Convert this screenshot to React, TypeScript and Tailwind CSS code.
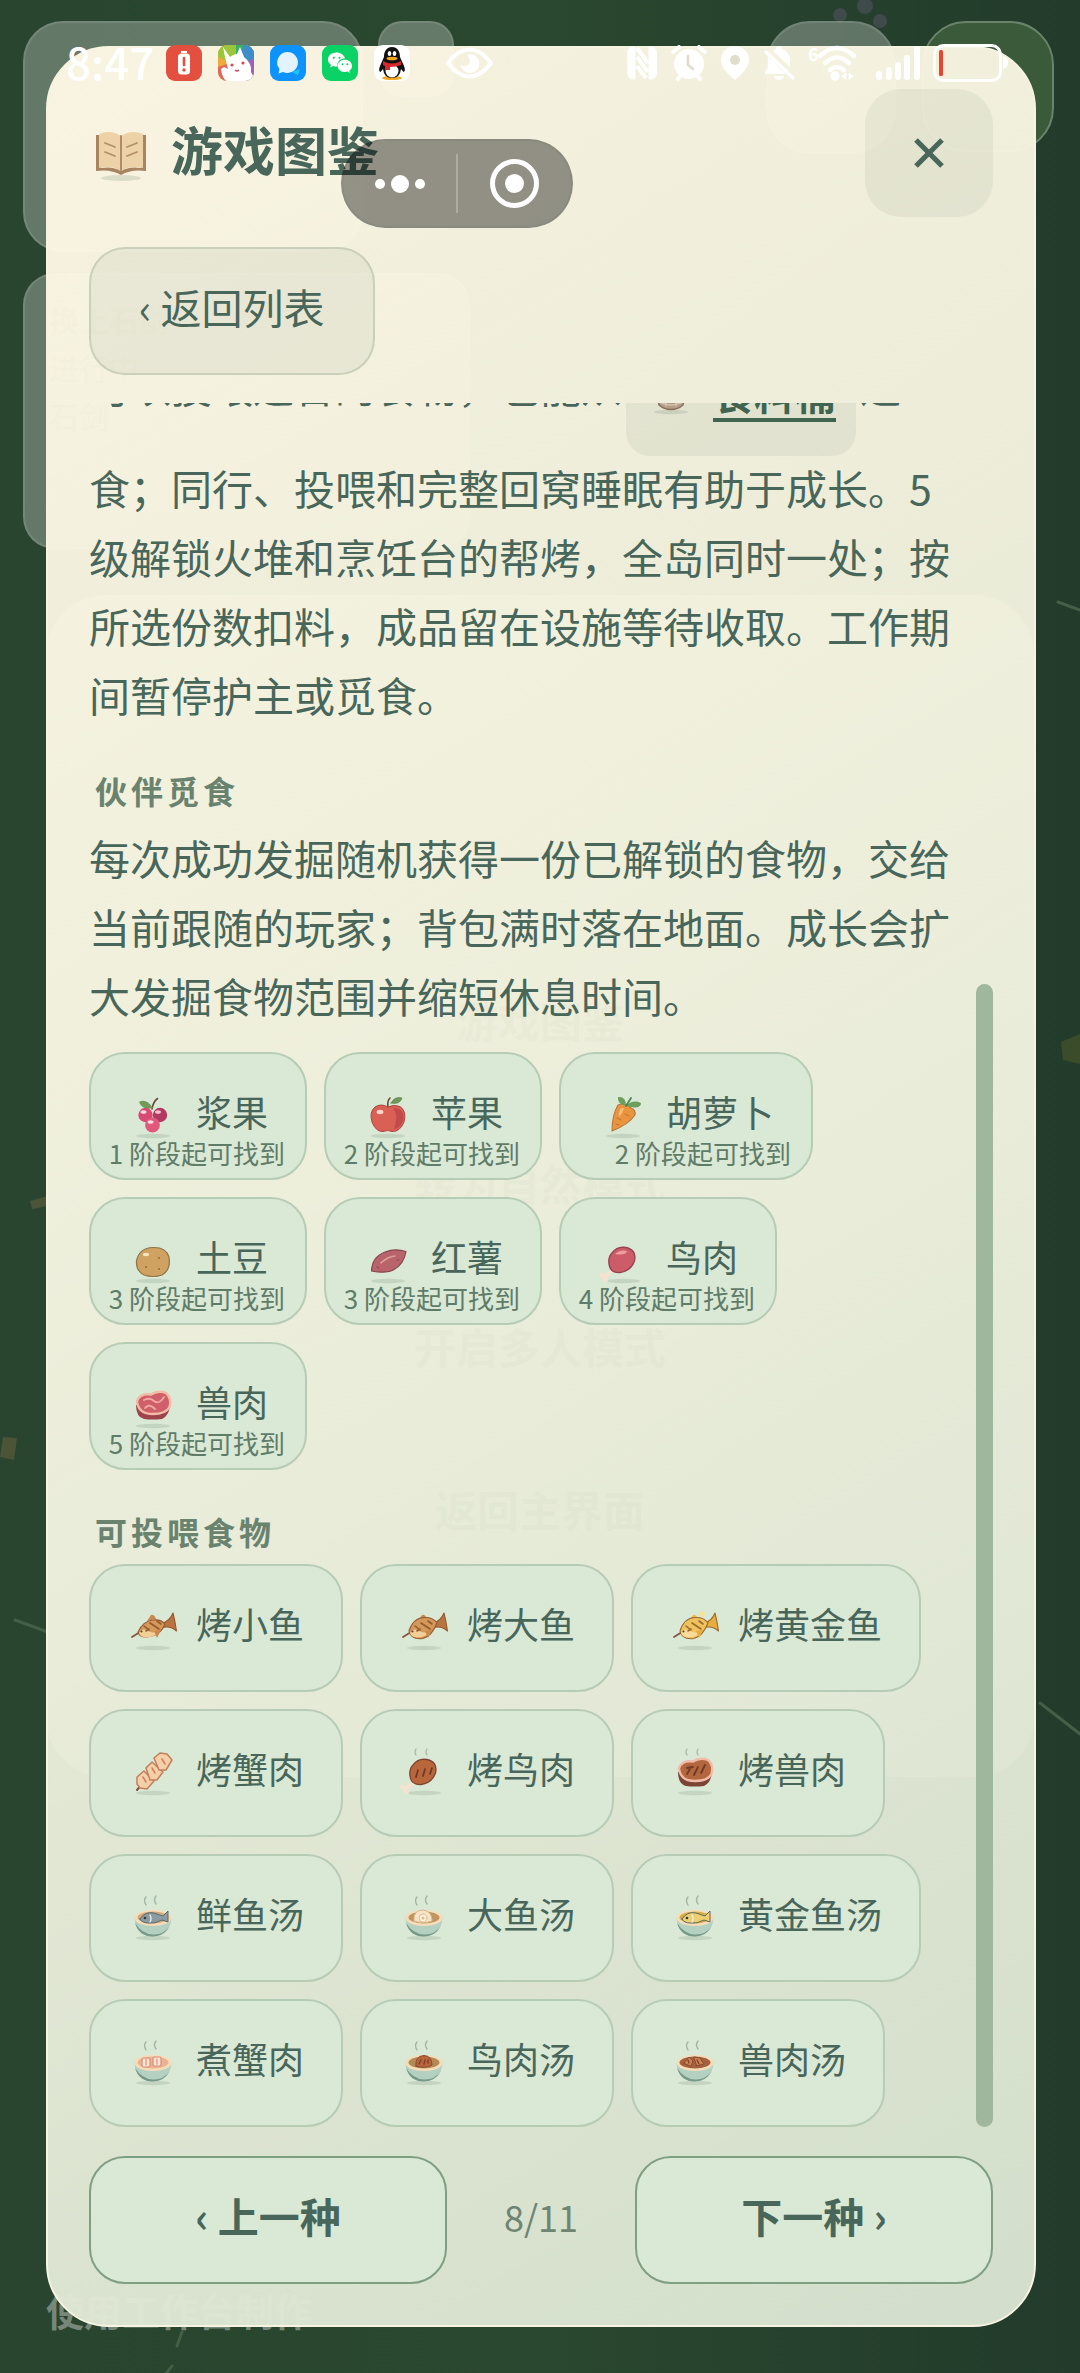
import React, { ReactNode } from 'react';
import { X } from 'lucide-react';

interface Food {
    name: string;
    icon: ReactNode;
    stage?: number;
}

const Shadow = () => (
    <ellipse cx="25" cy="45" rx="17" ry="2.2" fill="#5c7a62" opacity="0.18" />
);

const FoodSvg = ({ children }: { children: ReactNode }) => (
    <svg
        viewBox="0 0 50 50"
        className="h-[50px] w-[50px] shrink-0 overflow-visible"
        fill="none"
        strokeLinecap="round"
        strokeLinejoin="round"
        aria-hidden="true"
    >
        <Shadow />
        {children}
    </svg>
);

const Berries = () => (
    <FoodSvg>
        <path d="M24 18Q25 11 29.5 7.5" stroke="#6b4a3a" strokeWidth="1.6" />
        <path d="M11 11Q18 7 25 17Q15 20 11 11Z" fill="#6f9a58" />
        <circle cx="17.5" cy="24" r="7.2" fill="#d94a73" />
        <circle cx="32" cy="24" r="7.2" fill="#b23a63" />
        <circle cx="24.5" cy="34" r="7.4" fill="#e0587c" />
        <ellipse cx="15.5" cy="21" rx="3" ry="1.8" fill="#fbd9de" />
        <ellipse cx="30" cy="21" rx="3" ry="1.8" fill="#f3c0cb" />
        <ellipse cx="22.5" cy="31" rx="3" ry="1.8" fill="#fbd9de" />
    </FoodSvg>
);

const Apple = () => (
    <FoodSvg>
        <path d="M25 15Q24 10 27 7" stroke="#6b4a3a" strokeWidth="1.6" />
        <path d="M28 12Q32 5 39 7Q37 14 28 12Z" fill="#6f9a58" stroke="#55804a" strokeWidth="0.7" />
        <path
            d="M25 16Q18 12 12 16Q6 21 9 31Q13 41 20 40.500Q25 38.500 29 40.500Q37 41 41 31Q44 20 37 15.500Q30 13 25 16Z"
            fill="#da5f55"
            stroke="#ab453f"
            strokeWidth="1"
        />
        <path d="M30 17Q36 24 31 38Q38 37 40 29Q42 17 30 17Z" fill="#c24a47" />
        <ellipse cx="17" cy="21" rx="3.4" ry="2.2" fill="#fbd5c6" />
    </FoodSvg>
);

const Carrot = () => (
    <FoodSvg>
        <path
            d="M20 14Q27 11 33 17Q38 19 37 24Q30 34 14 40Q14 24 20 14Z"
            fill="#ea9440"
            stroke="#b9763a"
            strokeWidth="1.1"
        />
        <path d="M23 17Q20 22 21 26Q25 22 26 17Z" fill="#f5bd78" />
        <path d="M19 27l4 2M27 23l4 2M18 33l3 1" stroke="#b9763a" strokeWidth="1" />
        <path d="M28 15Q19 13 20 6Q28 5 28 15Z" fill="#6b9f5c" />
        <path d="M28 15Q35 8 43 12Q43 19 28 15Z" fill="#6b9f5c" />
        <path d="M28 15L33 7" stroke="#4f8550" strokeWidth="1.8" />
    </FoodSvg>
);

const Potato = () => (
    <FoodSvg>
        <path
            d="M25 11.500Q38 11 41 21Q43 34 34 39Q25 42 16 39Q8 35 8.500 25Q11 12 25 11.500Z"
            fill="#cfa262"
            stroke="#8e7449"
            strokeWidth="1.2"
        />
        <ellipse cx="18" cy="18.500" rx="3.2" ry="1.7" fill="#f7e3bd" />
        <g fill="#94733f">
            <circle cx="31" cy="22" r="1.1" />
            <circle cx="18" cy="31" r="1.1" />
            <circle cx="31" cy="33" r="1.1" />
        </g>
    </FoodSvg>
);

const SweetPotato = () => (
    <FoodSvg>
        <path
            d="M8.500 35Q9 21 22 16Q32 12 43 15.500Q41 28 31 33.500Q24 38 8.500 35Z"
            fill="#b9636a"
            stroke="#854850"
            strokeWidth="1.2"
        />
        <path d="M18 27Q24 21 32 20" stroke="#e0a09a" strokeWidth="1.6" />
        <path d="M14 31l2 1M34 24l2 0" stroke="#854850" strokeWidth="1" />
    </FoodSvg>
);

const BirdMeat = ({ cooked = false }: { cooked?: boolean }) => (
    <FoodSvg>
        {cooked && <path d="M17 1Q15 4 17 7M28 1Q26 4 28 7" stroke="#a9b9a8" strokeWidth="1.3" />}
        <path d="M15 34L6 41M3 38.500L8 44" stroke="#f5e3cf" strokeWidth="4" />
        <path
            d="M14 17Q19 10 28 11.500Q39 14 36.500 25Q33 35 22 36.500Q12 37 11 28Q10 21 14 17Z"
            fill={cooked ? '#b9673a' : '#cb5c68'}
            stroke={cooked ? '#7e4630' : '#96434f'}
            strokeWidth="1.3"
        />
        {cooked ? (
            <path d="M17 29l2-7M24 28l2-7M31 26l2-6" stroke="#6d3a2a" strokeWidth="1.8" />
        ) : (
            <path d="M17 18Q22 13 29 15Q28 20 17 18Z" fill="#ee9c9c" />
        )}
    </FoodSvg>
);

const BeastMeat = ({ cooked = false }: { cooked?: boolean }) => (
    <FoodSvg>
        {cooked && <path d="M17 1Q15 4 17 7M28 1Q26 4 28 7" stroke="#a9b9a8" strokeWidth="1.3" />}
        <path
            d="M8 24Q8 36 16 38Q24 39 34 38Q42 34 42 22Z"
            fill={cooked ? '#7c4434' : '#9d434c'}
        />
        <path
            d="M9 20Q12 12 23 13.500Q30 9 38 12Q44 17 41.500 26Q38 33 25 33Q10 33 9 20Z"
            fill={cooked ? '#b4673e' : '#cf5f68'}
            stroke="#f2bba8"
            strokeWidth="2.4"
        />
        {cooked ? (
            <path d="M17 26l4-7M24 27l4-8M31 25l4-8M17 20l6-1" stroke="#6d3a2a" strokeWidth="1.8" />
        ) : (
            <path d="M16 19Q22 16 26 20Q31 24 36 16M17 27Q21 22 27 28" stroke="#f0aaa5" strokeWidth="1.8" />
        )}
    </FoodSvg>
);

const GrilledFish = ({ kind }: { kind: 'small' | 'big' | 'gold' }) => {
    const gold = kind === 'gold';
    const body = gold ? '#f0c25e' : '#d3995a';
    const belly = gold ? '#fadb9b' : '#f3cf98';
    const line = gold ? '#9a6b30' : '#94592f';
    return (
        <FoodSvg>
            <path d="M4 34L12 29" stroke="#84573a" strokeWidth="1.8" />
            {gold && <path d="M32 8l1 2 2 1-2 1-1 2-1-2-2-1 2-1z" fill="#fbe58c" stroke="#fbe58c" />}
            <path d="M19 18L23 12Q26 11 28 16Z" fill={gold ? '#efbb3e' : '#c9894c'} />
            <path d="M33 21Q42 18 45 10Q47 18 48.500 28Q42 22 33 25Z" fill={gold ? '#e7ad3f' : '#b9753f'} stroke={line} strokeWidth="1.1" />
            <path
                d={
                    kind === 'small'
                        ? 'M10 29Q15 18 25 17Q33 16 37 21Q33 31 24 33Q12 36 10 29Z'
                        : 'M10 28Q14 15 25 14.500Q34 14 38 20Q33 33 24 35.500Q12 37 10 28Z'
                }
                fill={body}
                stroke={line}
                strokeWidth="1.1"
            />
            <path d="M11 30Q15 24 20 28Q27 31 32 28Q27 34 18 34.500Q12 34 11 30Z" fill={belly} />
            <path d="M26 28L29 35L33 27Z" fill={gold ? '#e7ad3f' : '#c9894c'} />
            <path d="M16 23l5 4M22 20l9 6M18 28l3-2M29 18l4 3" stroke={line} strokeWidth="1.6" />
            <circle cx="13.500" cy="28.500" r="1" fill="#5a3a26" />
        </FoodSvg>
    );
};

const CrabSkewer = () => (
    <FoodSvg>
        <path d="M9 42L14 36" stroke="#7d5038" strokeWidth="2" />
        <g fill="#f5cfa8" stroke="#c07f5c" strokeWidth="1.5">
            <path d="M9 29L16 23L26 33L19 41L12 40L9 36Z" />
            <path d="M18 20L24 14L35 24L29 32L22 32Z" />
            <path d="M26 10L32 5L39 6L44 12L38 22L31 22Z" />
        </g>
        <path d="M15 29l3 5M24 20l3 5M34 11l3 5" stroke="#d27e5d" strokeWidth="1.5" />
    </FoodSvg>
);

const Bowl = ({ soup, children }: { soup: string; children: ReactNode }) => (
    <FoodSvg>
        <path d="M18 4Q15 7 18 12M28 3Q25 7 28 11" stroke="#a3b5a4" strokeWidth="1.4" />
        <path d="M6.500 25Q8 43 25 43.500Q42 43 43.500 25Z" fill="#b4d0c0" />
        <path d="M7 30Q11 43.500 25 43.500Q36 43 41 34Q35 42 25 41.500Q14 41 7 30Z" fill="#76998a" />
        <ellipse cx="25" cy="25" rx="18.500" ry="8" fill="#f6dcb8" />
        <ellipse cx="25" cy="24.500" rx="15.500" ry="6" fill={soup} />
        {children}
    </FoodSvg>
);

const SoupFish = ({ color }: { color: string }) => (
    <g>
        <path
            d="M12 26Q17 18 26 20Q32 22 35 23L40 18L40 29L34 27Q27 31 20 30Q14 30 12 26Z"
            fill={color}
            stroke="#5d6b6c"
            strokeWidth="1"
        />
        <path d="M22 22Q24 26 22 29" stroke="#eef0e6" strokeWidth="1.3" />
        <circle cx="17" cy="25" r="1.3" fill="#2f3d3e" />
    </g>
);

const CrabSoup = () => (
    <Bowl soup="#eab394">
        <g fill="#fbe6d6" stroke="#dc8c74" strokeWidth="1.2">
            <rect x="14" y="20" width="8" height="9" rx="1.5" />
            <rect x="25" y="19" width="8" height="9" rx="1.5" />
        </g>
        <path d="M18 21v6M29 21v5" stroke="#e79d85" strokeWidth="1.4" />
    </Bowl>
);

const BigFishSoup = () => (
    <Bowl soup="#bf9560">
        <path d="M15 28Q14 17 24 17Q33 18 33 28Q24 31 15 28Z" fill="#f7e4c6" stroke="#d9b98c" strokeWidth="1" />
        <circle cx="24" cy="25" r="4" fill="#fbf1dd" stroke="#dfbf95" />
        <circle cx="24" cy="25" r="1.500" fill="#e2b98a" />
    </Bowl>
);

const BirdSoup = () => (
    <Bowl soup="#b18a55">
        <path d="M17 28Q16 18 25 17.500Q33 18 33 27Q26 31 17 28Z" fill="#bb663a" stroke="#88492f" strokeWidth="1" />
        <path d="M20 26l2-4M25 26l1-4M29 25l0-3" stroke="#7a3f29" strokeWidth="1.4" />
    </Bowl>
);

const BeastSoup = () => (
    <Bowl soup="#a4613f">
        <path d="M14 25L19 19L23 23L21 28Z M24 19L30 20L34 26L27 28Z" fill="#cc8350" stroke="#8d4a30" strokeWidth="1" />
        <path d="M27 22l2 4M18 22l1 3" stroke="#7a3f29" strokeWidth="1.300" />
    </Bowl>
);

const Bucket = () => (
    <FoodSvg>
        <path d="M11 16Q11 4 25 4Q39 4 39 16" stroke="#8a7561" strokeWidth="2" />
        <path d="M10 18H40L37 38Q32 42.500 25 42.500Q18 42.500 13 38Z" fill="#b39d88" stroke="#86705c" strokeWidth="1.500" />
        <path d="M13 35Q25 41 37 35M20 20v19M30 20v19" stroke="#d2c1ad" strokeWidth="1.600" />
    </FoodSvg>
);

const foraged: Food[] = [
    { name: '浆果', stage: 1, icon: <Berries /> },
    { name: '苹果', stage: 2, icon: <Apple /> },
    { name: '胡萝卜', stage: 2, icon: <Carrot /> },
    { name: '土豆', stage: 3, icon: <Potato /> },
    { name: '红薯', stage: 3, icon: <SweetPotato /> },
    { name: '鸟肉', stage: 4, icon: <BirdMeat /> },
    { name: '兽肉', stage: 5, icon: <BeastMeat /> },
];

const feedable: Food[] = [
    { name: '烤小鱼', icon: <GrilledFish kind="small" /> },
    { name: '烤大鱼', icon: <GrilledFish kind="big" /> },
    { name: '烤黄金鱼', icon: <GrilledFish kind="gold" /> },
    { name: '烤蟹肉', icon: <CrabSkewer /> },
    { name: '烤鸟肉', icon: <BirdMeat cooked /> },
    { name: '烤兽肉', icon: <BeastMeat cooked /> },
    { name: '鲜鱼汤', icon: <Bowl soup="#d9a878"><SoupFish color="#8b9ba3" /></Bowl> },
    { name: '大鱼汤', icon: <BigFishSoup /> },
    { name: '黄金鱼汤', icon: <Bowl soup="#d9ae3f"><SoupFish color="#efcf6d" /></Bowl> },
    { name: '煮蟹肉', icon: <CrabSoup /> },
    { name: '鸟肉汤', icon: <BirdSoup /> },
    { name: '兽肉汤', icon: <BeastSoup /> },
];

const FoodChips = ({ foods }: { foods: Food[] }) => (
    <ul className="flex flex-wrap gap-[17px]">
        {foods.map(({ name, icon, stage }) => (
            <li key={name}>
                <button
                    type="button"
                    className="relative flex h-32 items-center gap-[18px] rounded-[36px] border-2 border-[#b6ccb5] bg-[#dae8d6] px-[37px] text-[36px]"
                >
                    {icon}
                    <span className="pb-[10px] leading-[40px]">{name}</span>
                    {stage && (
                        <small className="absolute right-5 bottom-[10px] text-[26px] leading-[30px] whitespace-nowrap text-[#5f7c69]">
                            {stage} 阶段起可找到
                        </small>
                    )}
                </button>
            </li>
        ))}
    </ul>
);

const SectionTitle = ({ children }: { children: ReactNode }) => (
    <h3 className="mt-10 mb-3 pl-[6px] text-[32px] leading-[42px] font-bold tracking-[4px] text-[#6a836f]">
        {children}
    </h3>
);

// Dimmed game HUD and pause menu that stay behind the guide panel
const Backdrop = () => (
    <div className="absolute inset-0 overflow-hidden" aria-hidden="true">
        <svg className="absolute inset-0 h-full w-full" fill="none" strokeLinecap="round">
            <g fill="#3f4a4a">
                <circle cx="840" cy="15" r="7" />
                <circle cx="865" cy="6" r="8" />
                <circle cx="880" cy="21" r="7" />
            </g>
            <g stroke="#445f47" strokeWidth="3">
                <path d="M1058 602L1080 610" />
                <path d="M1040 1703L1080 1734" />
                <path d="M15 1620L48 1632" />
                <path d="M182 2332L177 2346" />
                <path d="M172 2366L164 2376L156 2380" />
            </g>
            <path d="M30 1201L48 1196V1206L32 1209Z" fill="#4b5437" />
            <path d="M3 1437L17 1438L14 1460L0 1457Z" fill="#4b5437" />
            <path d="M1061 1042L1080 1034V1064L1063 1060Z" fill="#3b4c2b" />
        </svg>
        <div className="absolute top-[21px] left-[23px] h-[231px] w-[340px] rounded-[40px] border-2 border-white/10 bg-white/28" />
        <div className="absolute top-[21px] left-[378px] h-[76px] w-[76px] rounded-[24px] border-2 border-white/10 bg-white/28" />
        <div className="absolute top-[21px] left-[766px] h-[133px] w-[130px] rounded-[44px] border-2 border-white/10 bg-white/28" />
        <div className="absolute top-[21px] left-[922px] h-[131px] w-[132px] rounded-[44px] border-2 border-[#6b836b] bg-[#3b5a3a]" />
        <div className="absolute top-[273px] left-[23px] h-[276px] w-[447px] rounded-[32px] border-2 border-white/10 bg-white/28 pt-5 pl-6 text-[30px] leading-[48px] text-[#1e3324]">
            <p className="font-bold">换上石剑</p>
            <p>进行中</p>
            <p>石剑</p>
        </div>
        <div className="absolute inset-x-[46px] top-[595px] flex h-[1182px] flex-col items-center rounded-[60px] bg-white/45 pt-[395px] text-[42px] font-bold text-[#1e3324]">
            <p className="mb-[103px] leading-[60px]">游戏图鉴</p>
            <p className="mb-[103px] leading-[60px]">转为自然模式</p>
            <p className="mb-[103px] leading-[60px]">开启多人模式</p>
            <p className="leading-[60px]">返回主界面</p>
        </div>
        <p className="absolute bottom-[38px] left-[46px] text-[38px] leading-[50px] font-bold text-[#77877a]">
            使用工作台制作
        </p>
    </div>
);

const StatusBar = () => (
    <div className="pointer-events-none absolute inset-x-0 top-[44px] flex h-[38px] items-center justify-between pr-[72px] pl-[66px] text-white">
        <div className="flex items-center gap-4">
            <span className="w-[84px] pb-1 text-[44px] leading-[38px] font-medium">8:47</span>
            <svg viewBox="0 0 36 36" className="h-9 w-9">
                <rect width="36" height="36" rx="9" fill="#e4503f" />
                <path d="M15 6h6v2h-6z" fill="#fff" />
                <rect x="12" y="8.500" width="12" height="21" rx="3.500" fill="#fff" />
                <path d="M18 13v7" stroke="#e4503f" strokeWidth="2.600" strokeLinecap="round" />
                <circle cx="18" cy="25" r="1.700" fill="#e4503f" />
            </svg>
            <svg viewBox="0 0 36 36" className="h-9 w-9">
                <defs>
                    <clipPath id="app-shape">
                        <rect width="36" height="36" rx="9" />
                    </clipPath>
                </defs>
                <g clipPath="url(#app-shape)">
                    <rect width="36" height="36" fill="#f0a93c" />
                    <path d="M0 0H20L14 18L0 12Z" fill="#9cc63a" />
                    <path d="M18 0H36V12L18 16Z" fill="#3fae6a" />
                    <path d="M26 0H36V20L20 16Z" fill="#3f8ccb" />
                    <path d="M36 14V36H24L22 18Z" fill="#9b62b5" />
                    <path d="M0 22L12 18V36H0Z" fill="#e2685f" />
                    <path d="M5 2L12 12Q16 9 19 9L22 2L26 12Q34 18 33 27Q36 31 36 36H8Q4 32 3 24L6 22L10 24Q8 16 7 12Z" fill="#fff" />
                    <circle cx="14" cy="20" r="1.600" fill="#d9485a" />
                    <circle cx="25" cy="18" r="1.600" fill="#d9485a" />
                    <path d="M17 25q2 2 4 0" stroke="#d9485a" strokeWidth="1.200" fill="none" />
                </g>
            </svg>
            <svg viewBox="0 0 36 36" className="h-9 w-9">
                <rect width="36" height="36" rx="9" fill="#0d93fb" />
                <path d="M22 27L30 24L28 30Z" fill="#19c8f5" />
                <path d="M17 7A10.500 10.500 0 1 1 13 27L8.500 28.500L9.500 24A10.500 10.500 0 0 1 17 7Z" fill="#e3f2ff" />
            </svg>
            <svg viewBox="0 0 36 36" className="h-9 w-9">
                <rect width="36" height="36" rx="9" fill="#0bd264" />
                <path d="M14.500 7.500C9.500 7.500 6 10.700 6 14.500c0 2.200 1.100 4 3 5.400L8.200 22.600 11.300 21a11 11 0 0 0 4.200.5c-.8-4.400 2.700-8.100 7.500-8.200-1-3.500-4.500-5.800-8.500-5.800z" fill="#fff" />
                <path d="M23 14.800c-4.200 0-7.300 2.700-7.300 6.100s3.100 6.100 7.300 6.100c.9 0 1.700-.1 2.500-.4l2.500 1.300-.7-2.200c1.700-1.200 2.700-2.900 2.700-4.800 0-3.400-3-6.100-7-6.100z" fill="#fff" />
                <g fill="#0bd264">
                    <circle cx="11.800" cy="12.800" r="1.100" />
                    <circle cx="17.500" cy="12.800" r="1.100" />
                    <circle cx="20.600" cy="19.300" r="1" />
                    <circle cx="25.400" cy="19.300" r="1" />
                </g>
            </svg>
            <svg viewBox="0 0 36 36" className="h-9 w-9">
                <rect width="36" height="36" rx="9" fill="#fff" />
                <ellipse cx="18" cy="33" rx="10" ry="2" fill="#f3a823" />
                <path d="M18 2C12.500 2 10 6.500 10 12L6 21Q4 26 6.500 27L9 24Q10 33 18 33Q26 33 27 24L29.500 27Q32 26 30 21L26 12C26 6.500 23.500 2 18 2Z" fill="#111" />
                <ellipse cx="18" cy="26" rx="6.500" ry="6.500" fill="#fff" />
                <ellipse cx="15.500" cy="8.500" rx="1.800" ry="2.600" fill="#fff" />
                <ellipse cx="20.500" cy="8.500" rx="1.800" ry="2.600" fill="#fff" />
                <ellipse cx="18" cy="13.500" rx="5.500" ry="1.800" fill="#f3a823" />
                <path d="M9 16Q18 21 27 16V20Q22 22 16 22V25H11V21L9 20Z" fill="#d8262c" />
            </svg>
            <svg viewBox="0 0 47 32" className="ml-5 h-8 w-[47px]" fill="none">
                <path d="M2 16Q12 2.500 23.500 2.500Q35 2.500 45 16Q35 29.500 23.500 29.500Q12 29.500 2 16Z" stroke="#fff" strokeWidth="4" />
                <path d="M24 7A9.500 9.500 0 1 1 14.500 18Q20 21 23 17Q25 12 21 8Z" fill="#fff" />
            </svg>
        </div>
        <div className="flex items-center gap-[13px]">
            <svg viewBox="0 0 32 36" className="h-9 w-8" fill="none" stroke="#fff">
                <path d="M9 2H6Q1.500 3 1.500 8V28Q1.500 33 6 34H9Z" fill="#fff" strokeWidth="1" />
                <path d="M23 2H26Q30.500 3 30.500 8V28Q30.500 33 26 34H23Z" fill="#fff" strokeWidth="1" />
                <path d="M11 3L22 18M11 12L22 27M11 21L20 33" strokeWidth="4" />
            </svg>
            <svg viewBox="0 0 36 36" className="h-9 w-9" fill="none" strokeLinecap="round">
                <circle cx="18" cy="19" r="15" fill="#fff" />
                <path d="M2 7L8 2M34 7L28 2M7 34L10 30M29 34L26 30" stroke="#fff" strokeWidth="4" />
                <path d="M17 11V20L22 24" stroke="#dedcc9" strokeWidth="2.500" />
            </svg>
            <svg viewBox="0 0 30 36" className="h-9 w-[30px]">
                <path d="M15 1A14 14 0 0 1 29 15Q29 24 15 35Q1 24 1 15A14 14 0 0 1 15 1Z" fill="#fff" />
                <circle cx="15" cy="15" r="5" fill="#dfdec9" />
            </svg>
            <svg viewBox="0 0 32 36" className="h-9 w-8" strokeLinecap="round">
                <path d="M16 1Q19 1 19 4Q27 7 27 15V22L10 6Q12 4 13 4Q13 1 16 1Z" fill="#fff" />
                <path d="M5 12L23 29H2Q1 27 5 23Z" fill="#fff" />
                <path d="M3 7L30 33" stroke="#fff" strokeWidth="3.500" />
                <path d="M11 31H21Q20 35 16 35Q12 35 11 31Z" fill="#fff" />
            </svg>
            <div className="relative h-9 w-[49px]">
                <span className="absolute -top-1 left-0 text-[18px] leading-[24px] font-bold">6</span>
                <svg viewBox="0 0 49 36" className="h-9 w-[49px]" fill="none" stroke="#fff" strokeWidth="4.500" strokeLinecap="round">
                    <path d="M12 11Q29 -5 46 11" />
                    <path d="M17 18Q29 7 41 18" />
                    <path d="M22 25Q29 19 36 25" />
                    <circle cx="27" cy="31" r="2.500" fill="#fff" />
                    <path d="M34 31L38 28V34ZM45 31L41 28V34Z" fill="#fff" strokeWidth="1" />
                </svg>
            </div>
            <svg viewBox="0 0 44 36" className="ml-[6px] h-9 w-11" stroke="#fff" strokeWidth="6" strokeLinecap="round">
                <path d="M3 29V32M13 25V32M22 20V32M31 13V32M41 4V32" />
            </svg>
            <svg viewBox="0 0 75 38" className="h-[38px] w-[75px]" fill="none">
                <rect x="1.500" y="1.500" width="66" height="35" rx="9" stroke="#fff" strokeWidth="3" />
                <path d="M70 12Q75 13 75 18.500Q75 24 70 25Z" fill="#fff" />
                <rect x="6" y="6" width="4" height="26" rx="1.500" fill="#e8452f" />
            </svg>
        </div>
    </div>
);

const MiniProgramCapsule = () => (
    <div className="absolute top-[139px] left-[341px] flex h-[89px] w-[232px] items-center rounded-full border-2 border-black/5 bg-black/40">
        <button type="button" aria-label="更多" className="flex h-full flex-1 items-center justify-center gap-[6px]">
            <span className="h-[10px] w-[10px] rounded-full bg-white" />
            <span className="h-[18px] w-[18px] rounded-full bg-white" />
            <span className="h-[10px] w-[10px] rounded-full bg-white" />
        </button>
        <span className="h-[59px] w-[2px] bg-white/25" />
        <button type="button" aria-label="关闭小程序" className="flex h-full flex-1 items-center justify-center">
            <span className="flex h-[49px] w-[49px] items-center justify-center rounded-full border-[5px] border-white">
                <span className="h-[19px] w-[19px] rounded-full bg-white" />
            </span>
        </button>
    </div>
);

const App = () => {
    return (
        <div className="relative flex h-screen flex-col overflow-hidden bg-linear-to-r from-[#29452f] via-[#2a472f] to-[#223b2b] pt-[46px] pr-[44px] pb-[46px] pl-[46px] font-['Noto_Sans_CJK_SC','Noto_Sans',sans-serif] text-[#48665a]">
            <Backdrop />

            <main className="relative flex min-h-0 flex-1 flex-col rounded-[63px] border-2 border-[#f6f3e1] bg-linear-[150deg,rgb(255_249_230_/_0.96),rgb(241_242_222_/_0.96)_45%,rgb(217_229_210_/_0.96)] p-[41px]">
                <header className="flex items-center justify-between">
                    <h1 className="flex items-center gap-[18px] text-[52px] leading-[60px] font-bold">
                        <svg viewBox="0 0 64 64" className="h-16 w-16" fill="none" strokeLinecap="round" strokeLinejoin="round" aria-hidden="true">
                            <ellipse cx="32" cy="57" rx="20" ry="3" fill="#5c7a62" opacity="0.180" />
                            <path d="M7 14H12V47Q24 45 32 50Q40 45 52 47V14H57V50Q42 48 32 54Q22 48 7 50Z" fill="#a98461" />
                            <path d="M10 13Q22 8 32 15Q42 8 54 13V47Q41 44 32 50Q23 44 10 47Z" fill="#ecd2a6" />
                            <path d="M32 15V49" stroke="#a98461" strokeWidth="1.800" />
                            <path d="M16 22L26 26M16 31L26 35M48 22L38 26M48 31L38 35" stroke="#b39067" strokeWidth="1.800" />
                        </svg>
                        <span className="pb-2">游戏图鉴</span>
                    </h1>
                    <button
                        type="button"
                        aria-label="关闭"
                        className="flex h-32 w-32 items-center justify-center rounded-[36px] bg-[#48665a]/8"
                    >
                        <X size={52} strokeWidth={2.4} strokeLinecap="butt" />
                    </button>
                </header>

                <button
                    type="button"
                    className="mt-[30px] h-32 self-start rounded-[36px] border-2 border-[#8fa38a]/35 bg-[#48665a]/7 px-12 pb-2 text-[41px]"
                >
                    ‹ 返回列表
                </button>

                <div className="mt-7 flex min-h-0 flex-1 gap-[22px]">
                    <div className="flex min-w-0 flex-1 flex-col justify-end overflow-hidden text-[41px] leading-[69px]">
                        <p>
                            可以投喂适合的食物，也能从
                            <a
                                href="#bucket"
                                className="mx-1 -my-[3px] inline-flex h-32 items-center gap-[17px] rounded-[24px] bg-[#48665a]/8 px-5 align-middle font-bold text-[#3f6450] underline decoration-[4px] underline-offset-[8px]"
                            >
                                <Bucket />
                                食料桶
                            </a>
                            进食；同行、投喂和完整回窝睡眠有助于成长。5 级解锁火堆和烹饪台的帮烤，全岛同时一处；按所选份数扣料，成品留在设施等待收取。工作期间暂停护主或觅食。
                        </p>
                        <SectionTitle>伙伴觅食</SectionTitle>
                        <p className="mb-[22px]">
                            每次成功发掘随机获得一份已解锁的食物，交给当前跟随的玩家；背包满时落在地面。成长会扩大发掘食物范围并缩短休息时间。
                        </p>
                        <FoodChips foods={foraged} />
                        <SectionTitle>可投喂食物</SectionTitle>
                        <FoodChips foods={feedable} />
                    </div>
                    <div className="flex w-[17px] flex-col justify-end">
                        <div className="h-[66.3%] rounded-full bg-[#9fb79c]" />
                    </div>
                </div>

                <footer className="mt-[29px] flex items-center justify-between text-[41px] font-bold">
                    <button
                        type="button"
                        className="h-32 w-[358px] rounded-[36px] border-2 border-[#7f9f82] bg-[#dae8d6] pb-2"
                    >
                        ‹ 上一种
                    </button>
                    <span className="pb-2 text-[36px] font-normal text-[#6f8574]">8/11</span>
                    <button
                        type="button"
                        className="h-32 w-[358px] rounded-[36px] border-2 border-[#7f9f82] bg-[#dae8d6] pb-2"
                    >
                        下一种 ›
                    </button>
                </footer>
            </main>

            <MiniProgramCapsule />
            <StatusBar />
        </div>
    );
};

export default App;
